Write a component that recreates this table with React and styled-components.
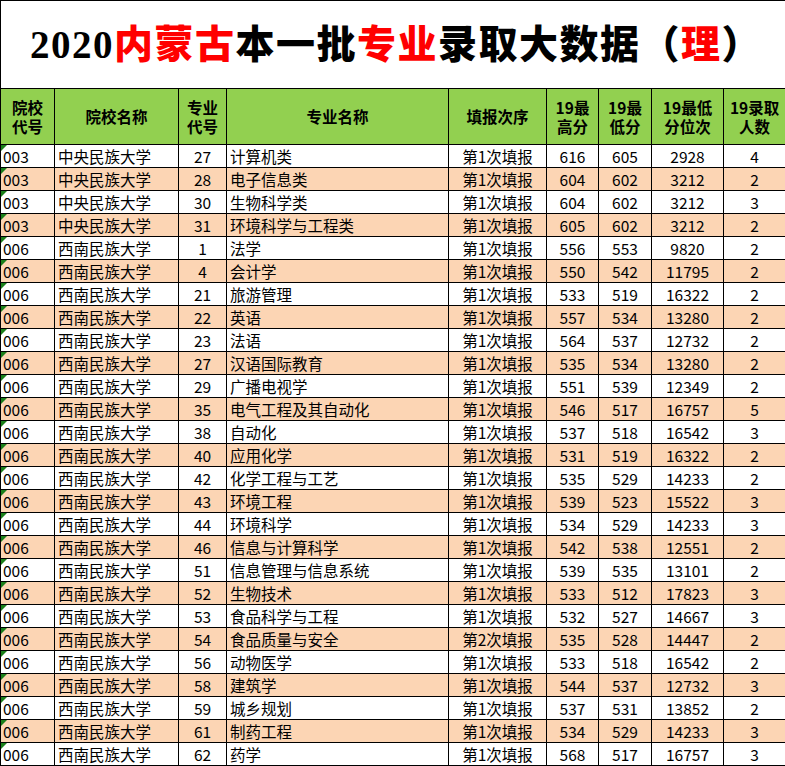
import React from "react";
import styled, { createGlobalStyle } from "styled-components";

const GlobalStyle = createGlobalStyle`
  html, body {
    margin: 0;
    padding: 0;
    background: #ffffff;
  }
`;

const Sheet = styled.table`
  width: 785px;
  border-collapse: collapse;
  table-layout: fixed;
  font-family: "Noto Sans CJK SC", "Liberation Sans", sans-serif;
  color: #000;
`;

const TitleCell = styled.td`
  height: 87px;
  border: 1px solid #000;
  padding: 0 0 0 6px;
  text-align: center;
  font-family: "Liberation Serif", "Noto Sans CJK SC", serif;
  font-weight: 900;
  font-size: 39px;
  letter-spacing: 1.5px;
  line-height: 1;
`;

const Red = styled.span`
  color: #ff0000;
`;

const HeadRow = styled.tr`
  height: 56px;
  background: #92d050;
`;

const HeadCell = styled.th`
  border: 1px solid #000;
  padding: 0 1px;
  font-size: 15.5px;
  font-weight: 700;
  line-height: 19px;
  text-align: center;
`;

const Row = styled.tr`
  height: 23px;
  background: ${(props) => (props.shade ? "#fcd5b4" : "#ffffff")};
`;

const Cell = styled.td`
  border: 1px solid #000;
  padding: ${(props) => (props.align === "left" ? "0 0 0 3px" : "0")};
  text-align: ${(props) => props.align || "center"};
  font-size: 15.5px;
  line-height: 21px;
  white-space: nowrap;
  overflow: hidden;
`;

const CodeCell = styled(Cell)`
  position: relative;
  padding-left: 2px;

  &::before {
    content: "";
    position: absolute;
    top: 0;
    left: 0;
    border-top: 6px solid #1a7f1a;
    border-right: 6px solid transparent;
  }
`;

const widths = [54, 124, 48, 222, 98, 52, 53, 72, 62];

const rows = [
  ["003", "中央民族大学", "27", "计算机类", "第1次填报", "616", "605", "2928", "4"],
  ["003", "中央民族大学", "28", "电子信息类", "第1次填报", "604", "602", "3212", "2"],
  ["003", "中央民族大学", "30", "生物科学类", "第1次填报", "604", "602", "3212", "3"],
  ["003", "中央民族大学", "31", "环境科学与工程类", "第1次填报", "605", "602", "3212", "2"],
  ["006", "西南民族大学", "1", "法学", "第1次填报", "556", "553", "9820", "2"],
  ["006", "西南民族大学", "4", "会计学", "第1次填报", "550", "542", "11795", "2"],
  ["006", "西南民族大学", "21", "旅游管理", "第1次填报", "533", "519", "16322", "2"],
  ["006", "西南民族大学", "22", "英语", "第1次填报", "557", "534", "13280", "2"],
  ["006", "西南民族大学", "23", "法语", "第1次填报", "564", "537", "12732", "2"],
  ["006", "西南民族大学", "27", "汉语国际教育", "第1次填报", "535", "534", "13280", "2"],
  ["006", "西南民族大学", "29", "广播电视学", "第1次填报", "551", "539", "12349", "2"],
  ["006", "西南民族大学", "35", "电气工程及其自动化", "第1次填报", "546", "517", "16757", "5"],
  ["006", "西南民族大学", "38", "自动化", "第1次填报", "537", "518", "16542", "3"],
  ["006", "西南民族大学", "40", "应用化学", "第1次填报", "531", "519", "16322", "2"],
  ["006", "西南民族大学", "42", "化学工程与工艺", "第1次填报", "535", "529", "14233", "2"],
  ["006", "西南民族大学", "43", "环境工程", "第1次填报", "539", "523", "15522", "3"],
  ["006", "西南民族大学", "44", "环境科学", "第1次填报", "534", "529", "14233", "3"],
  ["006", "西南民族大学", "46", "信息与计算科学", "第1次填报", "542", "538", "12551", "2"],
  ["006", "西南民族大学", "51", "信息管理与信息系统", "第1次填报", "539", "535", "13101", "2"],
  ["006", "西南民族大学", "52", "生物技术", "第1次填报", "533", "512", "17823", "3"],
  ["006", "西南民族大学", "53", "食品科学与工程", "第1次填报", "532", "527", "14667", "3"],
  ["006", "西南民族大学", "54", "食品质量与安全", "第2次填报", "535", "528", "14447", "2"],
  ["006", "西南民族大学", "56", "动物医学", "第1次填报", "533", "518", "16542", "2"],
  ["006", "西南民族大学", "58", "建筑学", "第1次填报", "544", "537", "12732", "3"],
  ["006", "西南民族大学", "59", "城乡规划", "第1次填报", "537", "531", "13852", "2"],
  ["006", "西南民族大学", "61", "制药工程", "第1次填报", "534", "529", "14233", "3"],
  ["006", "西南民族大学", "62", "药学", "第1次填报", "568", "517", "16757", "3"],
];

const App = () => {
  return (
    <>
      <GlobalStyle />
      <Sheet>
        <colgroup>
          {widths.map((w, i) => (
            <col key={i} style={{ width: w }} />
          ))}
        </colgroup>
        <tbody>
          <tr>
            <TitleCell colSpan={9}>
              2020<Red>内蒙古</Red>本一批<Red>专业</Red>录取大数据（<Red>理</Red>）
            </TitleCell>
          </tr>
          <HeadRow>
            <HeadCell>院校<br />代号</HeadCell>
            <HeadCell>院校名称</HeadCell>
            <HeadCell>专业<br />代号</HeadCell>
            <HeadCell>专业名称</HeadCell>
            <HeadCell>填报次序</HeadCell>
            <HeadCell>19最<br />高分</HeadCell>
            <HeadCell>19最<br />低分</HeadCell>
            <HeadCell>19最低<br />分位次</HeadCell>
            <HeadCell>19录取<br />人数</HeadCell>
          </HeadRow>
          {rows.map((r, i) => (
            <Row key={i} shade={i % 2 === 1}>
              <CodeCell align="left">{r[0]}</CodeCell>
              <Cell align="left">{r[1]}</Cell>
              <Cell>{r[2]}</Cell>
              <Cell align="left">{r[3]}</Cell>
              <Cell>{r[4]}</Cell>
              <Cell>{r[5]}</Cell>
              <Cell>{r[6]}</Cell>
              <Cell>{r[7]}</Cell>
              <Cell>{r[8]}</Cell>
            </Row>
          ))}
        </tbody>
      </Sheet>
    </>
  );
};

export default App;
